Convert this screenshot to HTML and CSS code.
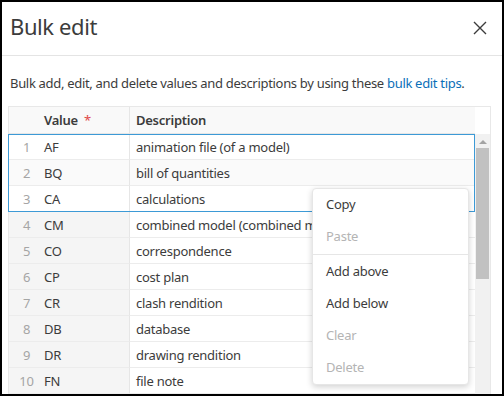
FILE: index.html
```html
<!DOCTYPE html>
<html>
<head>
<meta charset="utf-8">
<link rel="stylesheet" href="styles.css">
</head>
<body>
<div class="dialog">
  <div class="header">
    <h1 class="title">Bulk edit</h1>
    <svg class="close" width="14" height="14" viewBox="0 0 14 14"><path d="M1 1L13 13M13 1L1 13" stroke="#3c3c3c" stroke-width="1.4" fill="none"/></svg>
  </div>
  <p class="desc">Bulk add, edit, and delete values and descriptions by using these <a class="link">bulk edit tips</a>.</p>
  <div class="grid">
    <div class="grid-main">
      <div class="row head">
        <div class="c-num"></div>
        <div class="c-val">Value <span class="req">*</span></div>
        <div class="c-desc">Description</div>
      </div>
      <div class="body">
        <div class="sel-box"></div>
        <div class="row sel"><div class="c-num">1</div><div class="c-val">AF</div><div class="c-desc">animation file (of a model)</div></div>
        <div class="row sel alt"><div class="c-num">2</div><div class="c-val">BQ</div><div class="c-desc">bill of quantities</div></div>
        <div class="row sel"><div class="c-num">3</div><div class="c-val">CA</div><div class="c-desc">calculations</div></div>
        <div class="row"><div class="c-num">4</div><div class="c-val">CM</div><div class="c-desc">combined model (combined model)</div></div>
        <div class="row"><div class="c-num">5</div><div class="c-val">CO</div><div class="c-desc">correspondence</div></div>
        <div class="row"><div class="c-num">6</div><div class="c-val">CP</div><div class="c-desc">cost plan</div></div>
        <div class="row"><div class="c-num">7</div><div class="c-val">CR</div><div class="c-desc">clash rendition</div></div>
        <div class="row"><div class="c-num">8</div><div class="c-val">DB</div><div class="c-desc">database</div></div>
        <div class="row"><div class="c-num">9</div><div class="c-val">DR</div><div class="c-desc">drawing rendition</div></div>
        <div class="row"><div class="c-num">10</div><div class="c-val">FN</div><div class="c-desc">file note</div></div>
      </div>
    </div>
    <div class="scroll">
      <div class="scroll-head"></div>
      <div class="scroll-track">
        <div class="arrow"></div>
        <div class="thumb"></div>
      </div>
    </div>
    <ul class="menu">
      <li class="item">Copy</li>
      <li class="item disabled">Paste</li>
      <li class="sep"></li>
      <li class="item">Add above</li>
      <li class="item">Add below</li>
      <li class="item disabled">Clear</li>
      <li class="item disabled">Delete</li>
    </ul>
  </div>
</div>
</body>
</html>
```
FILE: styles.css
```css
* { box-sizing: border-box; }
html, body { margin: 0; padding: 0; background: #fff; }
body { font-family: "Noto Sans", "Open Sans", sans-serif; color: #3c3c3c; letter-spacing: -0.25px; }
.dialog {
  width: 504px;
  height: 396px;
  border: 2px solid #000;
  overflow: hidden;
  background: #fff;
}
.header {
  height: 54px;
  border-bottom: 1px solid #e4e4e4;
  display: flex;
  align-items: center;
  justify-content: space-between;
  padding: 0 15px 0 8px;
}
.title {
  margin: 0;
  font-size: 22px;
  font-weight: 400;
  color: #3c3c3c;
  line-height: 1;
  letter-spacing: -0.4px;
  position: relative;
  top: -3px;
}
.close { display: block; position: relative; top: -1px; }
.desc {
  margin: 17px 0 0 8px;
  font-size: 13px;
  line-height: 20px;
  letter-spacing: -0.31px;
  color: #3c3c3c;
}
.link { color: #0a6fb8; }
.grid {
  position: relative;
  margin: 13px 11px 0 6px;
  border: 1px solid #e8e8e8;
  display: flex;
  height: 300px;
}
.grid-main { flex: 1; }
.row {
  display: flex;
  height: 26px;
  font-size: 13px;
  line-height: 26px;
}
.row.head { height: 27px; background: #f9f9f9; font-weight: 600; line-height: 26px; border-bottom: 1px solid #e6e6e6; }
.c-num { width: 35px; text-align: center; color: #a5a5a5; background: #f5f5f5; border-bottom: 1px solid #ececec; }
.c-val { width: 86px; background: #f5f5f5; border-right: 1px solid #e6e6e6; border-bottom: 1px solid #ececec; }
.c-desc { flex: 1; padding-left: 6px; border-bottom: 1px solid #ececec; }
.head .c-num, .head .c-val, .head .c-desc { background: transparent; border-bottom: none; }
.req { color: #e04848; font-weight: 400; margin-left: 3px; }
.body { position: relative; }
.row.sel .c-num, .row.sel .c-val { background: #fff; }
.row.sel.alt .c-desc, .row.sel.alt .c-num, .row.sel.alt .c-val { background: #fafafa; }
.sel-box {
  position: absolute;
  left: -1px;
  top: 0;
  right: 0;
  height: 78px;
  border: 1px solid #3d9ad6;
  pointer-events: none;
  z-index: 1;
}
.scroll { width: 15px; display: flex; flex-direction: column; }
.scroll-head { height: 27px; background: #fff; }
.scroll-track { flex: 1; background: #f1f1f1; position: relative; padding: 0 1px; }
.arrow {
  width: 0; height: 0;
  margin: 6px auto 0;
  border-left: 4px solid transparent;
  border-right: 4px solid transparent;
  border-bottom: 4px solid #a3a3a3;
}
.thumb { margin-top: 4px; height: 131px; background: #c1c1c1; }
.menu {
  position: absolute;
  left: 303px;
  top: 81px;
  width: 157px;
  margin: 0;
  padding: 0;
  list-style: none;
  background: #fff;
  border: 1px solid #e6e6e6;
  border-radius: 4px;
  box-shadow: 0 2px 6px rgba(0,0,0,0.18);
  z-index: 2;
}
.item {
  height: 32px;
  line-height: 31px;
  padding-left: 13px;
  font-size: 13px;
  color: #3c3c3c;
}
.item.disabled { color: #b4b4b4; }
.sep { height: 1px; background: #e6e6e6; margin: 1px 0 1px; }
```
